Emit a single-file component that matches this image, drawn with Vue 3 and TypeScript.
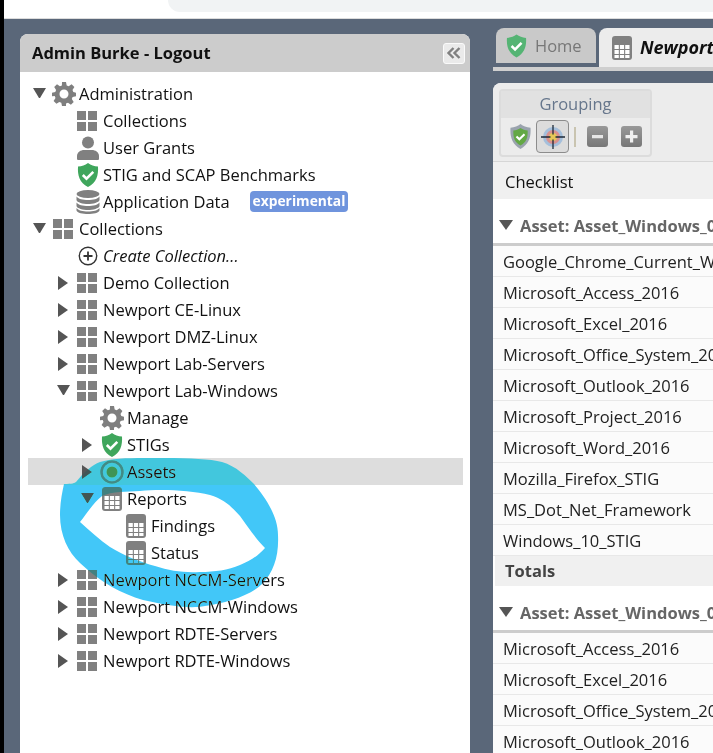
<script setup lang="ts">
type Icon = 'gear' | 'grid' | 'user' | 'shield' | 'db' | 'add' | 'target' | 'report'
interface Row {
  label: string
  depth: number
  icon: Icon
  arrow?: 'open' | 'closed'
  italic?: boolean
  badge?: string
  selected?: boolean
}

const rows: Row[] = [
  { label: 'Administration', depth: 0, icon: 'gear', arrow: 'open' },
  { label: 'Collections', depth: 1, icon: 'grid' },
  { label: 'User Grants', depth: 1, icon: 'user' },
  { label: 'STIG and SCAP Benchmarks', depth: 1, icon: 'shield' },
  { label: 'Application Data', depth: 1, icon: 'db', badge: 'experimental' },
  { label: 'Collections', depth: 0, icon: 'grid', arrow: 'open' },
  { label: 'Create Collection...', depth: 1, icon: 'add', italic: true },
  { label: 'Demo Collection', depth: 1, icon: 'grid', arrow: 'closed' },
  { label: 'Newport CE-Linux', depth: 1, icon: 'grid', arrow: 'closed' },
  { label: 'Newport DMZ-Linux', depth: 1, icon: 'grid', arrow: 'closed' },
  { label: 'Newport Lab-Servers', depth: 1, icon: 'grid', arrow: 'closed' },
  { label: 'Newport Lab-Windows', depth: 1, icon: 'grid', arrow: 'open' },
  { label: 'Manage', depth: 2, icon: 'gear' },
  { label: 'STIGs', depth: 2, icon: 'shield', arrow: 'closed' },
  { label: 'Assets', depth: 2, icon: 'target', arrow: 'closed', selected: true },
  { label: 'Reports', depth: 2, icon: 'report', arrow: 'open' },
  { label: 'Findings', depth: 3, icon: 'report' },
  { label: 'Status', depth: 3, icon: 'report' },
  { label: 'Newport NCCM-Servers', depth: 1, icon: 'grid', arrow: 'closed' },
  { label: 'Newport NCCM-Windows', depth: 1, icon: 'grid', arrow: 'closed' },
  { label: 'Newport RDTE-Servers', depth: 1, icon: 'grid', arrow: 'closed' },
  { label: 'Newport RDTE-Windows', depth: 1, icon: 'grid', arrow: 'closed' },
]

const firstGroup = [
  'Google_Chrome_Current_Windows',
  'Microsoft_Access_2016',
  'Microsoft_Excel_2016',
  'Microsoft_Office_System_2016',
  'Microsoft_Outlook_2016',
  'Microsoft_Project_2016',
  'Microsoft_Word_2016',
  'Mozilla_Firefox_STIG',
  'MS_Dot_Net_Framework',
  'Windows_10_STIG',
]

const secondGroup = [
  'Microsoft_Access_2016',
  'Microsoft_Excel_2016',
  'Microsoft_Office_System_2016',
  'Microsoft_Outlook_2016',
]

const reportCells =
  'M2.500 9h4.300v4H2.500zM7.900 9h4.200v4H7.900zM13.200 9h4.300v4h-4.300zM2.500 14h4.300v4H2.500zM7.900 14h4.200v4H7.900zM13.200 14h4.300v4h-4.300zM2.500 19h4.300v3H2.500zM7.900 19h4.200v3H7.900zM13.200 19h4.300v3h-4.300z'
</script>

<template>
  <div class="screen">
    <div class="edge"></div>
    <div class="page">
      <div class="browser-bar"><div class="address"></div></div>
      <div class="workspace">
        <aside class="nav-panel">
          <header class="nav-head">
            <span>Admin Burke - Logout</span>
            <button class="collapse">
              <svg width="16" height="14" viewBox="0 0 16 14" fill="none" stroke="#808080" stroke-width="2.4">
                <path d="M7.500 2 2.500 7l5 5M13.500 2l-5 5 5 5" />
              </svg>
            </button>
          </header>
          <div class="tree">
            <div
              v-for="row in rows"
              :key="row.label + row.depth"
              class="tree-row"
              :class="[`depth-${row.depth}`, { selected: row.selected }]"
            >
              <span class="arrow" :class="row.arrow"></span>
              <span class="tree-icon" :class="`icon-${row.icon}`">
                <svg v-if="row.icon === 'gear'" width="24" height="24" viewBox="0 0 24 24">
                  <path fill="#7f7f7f" fill-rule="evenodd" d="M10 0h4l.7 3.400 2 .8L19.600 2.300l2.800 2.800-1.900 2.900.8 2L24 10.700v3.600l-3.400.7-.8 2 1.900 2.900-2.800 2.800-2.900-1.900-2 .8L14 24h-4l-.7-3.300-2-.8-2.900 1.900-2.800-2.800 1.900-2.900-.8-2L0 14.300v-3.600L3.300 10l.8-2L2.200 5.100 5 2.300l2.900 1.900 2-.8zM12 7.500a4.500 4.500 0 1 0 0 9 4.500 4.500 0 0 0 0-9z" />
                </svg>
                <svg v-else-if="row.icon === 'grid'" width="20" height="20" viewBox="0 0 20 20" fill="#808080">
                  <path d="M0 0h9v9H0zM11 0h9v9h-9zM0 11h9v9H0zM11 11h9v9h-9z" />
                </svg>
                <svg v-else-if="row.icon === 'user'" width="22" height="24" viewBox="0 0 22 24" fill="#808080">
                  <circle cx="11" cy="6.500" r="6" />
                  <path d="M1 24c-1 0-1-1-1-2v-2c0-4 4-6 7-6h8c3 0 7 2 7 6v2c0 1 0 2-1 2z" />
                </svg>
                <svg v-else-if="row.icon === 'shield'" width="22" height="24" viewBox="0 0 22 24">
                  <path fill="#3fa65c" d="M11 0c3 2.200 6 3.200 10 3.500.6 9-1.500 16-10 20.500C2.500 19.500.4 12.500 1 3.500 5 3.200 8 2.200 11 0z" />
                  <path fill="none" stroke="#fff" stroke-width="2.600" d="m5.800 12 3.700 3.600 6.800-6.800" />
                </svg>
                <svg v-else-if="row.icon === 'db'" width="24" height="24" viewBox="0 0 24 24" fill="#808080">
                  <ellipse cx="12" cy="4" rx="11.500" ry="4" />
                  <path d="M.5 6.500C2 9 7 10 12 10s10-1 11.500-3.500V10C23 12.500 17 14 12 14S1 12.500.5 10zM.5 12.500C2 15 7 16 12 16s10-1 11.500-3.500V16C23 18.500 17 20 12 20S1 18.500.5 16zM.5 18C2 20.500 7 21.500 12 21.500S22 20.500 23.500 18v2.500C23 23 17 24 12 24S1 23 .5 20.500z" />
                </svg>
                <svg v-else-if="row.icon === 'add'" width="20" height="20" viewBox="0 0 20 20" fill="none" stroke="#333" stroke-width="1.400">
                  <circle cx="10" cy="10" r="8.700" />
                  <path stroke-width="1.800" d="M10 5.500v9M5.500 10h9" />
                </svg>
                <svg v-else-if="row.icon === 'target'" width="24" height="24" viewBox="0 0 24 24">
                  <circle cx="12" cy="12" r="10.500" fill="none" stroke="#4a8a86" stroke-width="2.600" />
                  <circle cx="12" cy="12" r="5.500" fill="#3f9455" />
                </svg>
                <svg v-else width="20" height="24" viewBox="0 0 20 24">
                  <rect width="20" height="24" rx="3" fill="#808080" />
                  <path fill="#fff" :d="reportCells" />
                </svg>
              </span>
              <span class="tree-label" :class="{ italic: row.italic }">{{ row.label }}</span>
              <span v-if="row.badge" class="badge">{{ row.badge }}</span>
            </div>
          </div>
        </aside>

        <main class="content">
          <div class="tabs">
            <div class="tab">
              <svg width="21" height="24" viewBox="0 0 22 24">
                <path fill="#55b474" d="M11 0c3 2.200 6 3.200 10 3.500.6 9-1.500 16-10 20.500C2.500 19.500.4 12.500 1 3.500 5 3.200 8 2.200 11 0z" />
                <path fill="none" stroke="#fff" stroke-width="2.600" d="m5.800 12 3.700 3.600 6.800-6.800" />
              </svg>
              <span>Home</span>
            </div>
            <div class="tab active">
              <svg width="20" height="24" viewBox="0 0 20 24">
                <rect width="20" height="24" rx="3" fill="#808080" />
                <path fill="#fff" :d="reportCells" />
              </svg>
              <span>Newport Lab-Windows</span>
            </div>
          </div>
          <div class="tab-strip"></div>

          <section class="grid-panel">
            <div class="toolbar">
              <div class="button-group">
                <div class="group-title">Grouping</div>
                <div class="group-buttons">
                  <svg class="tb-shield" width="21" height="25" viewBox="0 0 22 26">
                    <path fill="#9aa3ae" d="M11 0c3 2.400 6 3.400 10.500 3.800.6 10-1.500 17.200-10.500 22.200C2 21 0 13.800.5 3.800 5 3.400 8 2.400 11 0z" />
                    <path fill="#63a845" d="M11 4c2.500 1.600 4.500 2.400 7.500 2.800.3 7.500-1.200 12.500-7.500 15.700C4.700 19.300 3.200 14.300 3.500 6.800 6.500 6.400 8.500 5.600 11 4z" />
                    <path fill="none" stroke="#fff" stroke-width="2.200" d="m6.800 13 3 3 5.400-5.400" />
                  </svg>
                  <div class="tb-target">
                    <svg width="24" height="24" viewBox="0 0 24 24">
                      <circle cx="12" cy="12" r="10" fill="#a5bfdb" />
                      <circle cx="12" cy="12" r="7" fill="#d9918f" />
                      <circle cx="12" cy="12" r="4" fill="#e6c657" />
                      <path stroke="#1c2a3a" stroke-width="1.300" d="M12 0v9.500M12 14.500V24M0 12h9.500M14.500 12H24" />
                    </svg>
                  </div>
                  <span class="tb-sep"></span>
                  <span class="tb-square">
                    <svg width="21" height="21" viewBox="0 0 21 21"><path fill="#e6e6e6" d="M5 9h11v3.200H5z" /></svg>
                  </span>
                  <span class="tb-square plus">
                    <svg width="21" height="21" viewBox="0 0 21 21"><path fill="#f0f0f0" d="M9 4.500h3.200V9h4.300v3.200h-4.300v4.300H9v-4.300H4.500V9H9z" /></svg>
                  </span>
                </div>
              </div>
            </div>

            <div class="col-head">Checklist</div>

            <div class="group-head">
              <span class="group-arrow"></span>Asset: Asset_Windows_0
            </div>
            <div v-for="name in firstGroup" :key="name" class="grid-row">{{ name }}</div>
            <div class="totals">Totals</div>

            <div class="group-head">
              <span class="group-arrow"></span>Asset: Asset_Windows_0
            </div>
            <div v-for="name in secondGroup" :key="'b' + name" class="grid-row">{{ name }}</div>
          </section>
        </main>
      </div>
    </div>

    <!-- hand-drawn highlighter mark on top of the screenshot -->
    <svg class="scribble" width="713" height="753" viewBox="0 0 713 753">
      <path
        fill="#42c7f8"
        fill-rule="evenodd"
        d="M64 484C72 484 75 483 76 482C84 472 92 465 100 462C115 457 140 458 165 458C190 458 210 459 222 462C236 466 247 477 254 484C264 496 278 515 278 535C279 555 274 572 262 584C250 596 225 603 205 606C190 609 170 606 143 600C122 594 100 582 80 563C68 552 60 535 60 515C60 503 62 493 64 484Z
           M80 522C88 512 94 502 102 496C112 491 127 492 140 491C160 489 190 490 210 495C224 499 232 507 240 516C248 527 256 539 265 548C258 556 250 561 240 565C228 570 215 572 200 572C185 573 170 571 155 566C140 562 125 556 110 547C100 540 90 531 80 522Z"
      />
    </svg>
  </div>
</template>

<style>
html,
body {
  margin: 0;
  background: #5a6779;
}
</style>

<style scoped>
.screen {
  position: relative;
  display: flex;
  width: 713px;
  height: 753px;
  overflow: hidden;
  background: #5a6779;
  font-family: "Open Sans", "Noto Sans", sans-serif;
  color: #111;
}

.edge {
  flex-shrink: 0;
  width: 4px;
  background: #000;
}

.page {
  flex: 1;
  min-width: 0;
}

.browser-bar {
  box-sizing: border-box;
  height: 19px;
  background: #fff;
  border-bottom: 1px solid #dcdcdc;
  padding-left: 164px;
}

.address {
  height: 12px;
  background: #f1f3f4;
  border-bottom-left-radius: 12px;
}

.workspace {
  display: flex;
  height: 734px;
  padding-top: 15px;
  padding-left: 16px;
  box-sizing: border-box;
}

.nav-panel {
  width: 450px;
  flex-shrink: 0;
  background: #fff;
  border-radius: 8px 8px 0 0;
  overflow: hidden;
}

.nav-head {
  display: flex;
  align-items: center;
  justify-content: space-between;
  box-sizing: border-box;
  height: 38px;
  padding: 0 5px 0 12px;
  background: #cccccc;
  font-size: 16.500px;
  font-weight: 700;
  line-height: 36px;
}

.collapse {
  display: flex;
  align-items: center;
  justify-content: center;
  width: 22px;
  height: 21px;
  padding: 0;
  background: #eaeaea;
  border: 1px solid #fafafa;
  border-radius: 3px;
}

.tree {
  padding: 8px 7px 0 8px;
}

.tree-row {
  display: flex;
  align-items: center;
  height: 27px;
  font-size: 16.500px;
  white-space: nowrap;
}

.depth-0 { padding-left: 5px; }
.depth-1 { padding-left: 29px; }
.depth-2 { padding-left: 53px; }
.depth-3 { padding-left: 77px; }

.tree-row.selected {
  background: #dddddd;
}

.arrow {
  display: block;
  flex-shrink: 0;
  width: 19px;
  height: 14px;
}

.arrow.open {
  width: 13px;
  height: 0;
  margin-right: 6px;
  border-left: 6.500px solid transparent;
  border-right: 6.500px solid transparent;
  border-top: 10px solid #555;
  box-sizing: border-box;
  margin-top: -2px;
}

.arrow.closed {
  width: 0;
  height: 0;
  margin-left: 1px;
  margin-right: 8px;
  border-top: 7px solid transparent;
  border-bottom: 7px solid transparent;
  border-left: 10px solid #555;
  box-sizing: content-box;
}

.tree-icon {
  display: flex;
  align-items: center;
  justify-content: center;
  flex-shrink: 0;
  width: 24px;
  height: 24px;
  margin-right: 3px;
}

.icon-grid svg {
  margin-left: -2px;
}

.badge {
  margin-left: 20px;
  padding: 0 3px;
  height: 21px;
  line-height: 20px;
  background: #6f94dd;
  color: #fff;
  font-size: 13.800px;
  font-weight: 700;
  border-radius: 4px;
}

.italic {
  font-style: italic;
}

.content {
  flex: 1;
  min-width: 0;
  margin-left: 23px;
  margin-top: -6px;
}

.tabs {
  display: flex;
  align-items: flex-start;
  gap: 3px;
  height: 39px;
  padding-left: 3px;
  white-space: nowrap;
}

.tab {
  display: flex;
  flex-shrink: 0;
  align-items: center;
  gap: 8px;
  box-sizing: border-box;
  width: 100px;
  height: 35px;
  padding-left: 10px;
  background: #c9c9c9;
  border-radius: 8px 8px 0 0;
  color: #777;
  font-size: 16.500px;
}

.tab.active {
  width: 260px;
  height: 39px;
  padding-left: 13px;
  gap: 8px;
  background: #ececec;
  color: #111;
  font-size: 18px;
  font-weight: 700;
  font-style: italic;
  line-height: 37px;
}

.tab-strip {
  height: 4px;
  background: #cfcfcf;
}

.grid-panel {
  margin-top: 12px;
  background: #fff;
  border-radius: 8px 0 0 0;
  overflow: hidden;
  height: 680px;
}

.toolbar {
  box-sizing: border-box;
  height: 79px;
  padding: 6px 0 0 6px;
  background: #ececec;
  border-bottom: 1px solid #d6d6d6;
}

.button-group {
  box-sizing: border-box;
  width: 153px;
  height: 68px;
  border: 2px solid #dcdcdc;
  border-radius: 4px;
  background: #ececec;
}

.group-title {
  height: 27px;
  line-height: 26px;
  background: #e1e1e1;
  color: #66768c;
  font-size: 16.500px;
  text-align: center;
}

.group-buttons {
  display: flex;
  align-items: center;
  height: 37px;
  padding-left: 9px;
}

.tb-shield {
  margin-right: 5px;
}

.tb-target {
  display: flex;
  align-items: center;
  justify-content: center;
  box-sizing: border-box;
  width: 33px;
  height: 33px;
  background: #dcdcdc;
  border: 1px solid #8c8c8c;
  border-radius: 4px;
}

.tb-sep {
  width: 2px;
  height: 20px;
  margin: 0 11px 0 5px;
  background: #c9c4b0;
}

.tb-square {
  display: flex;
  align-items: center;
  justify-content: center;
  width: 21px;
  height: 21px;
  background: linear-gradient(#999, #777);
  border-radius: 3px;
}

.tb-square.plus {
  margin-left: 13px;
}

.col-head {
  height: 37px;
  line-height: 39px;
  padding-left: 12px;
  background: #f0f0f0;
  font-size: 16.500px;
}

.group-head {
  display: flex;
  align-items: center;
  box-sizing: border-box;
  height: 47px;
  padding: 8px 0 0 6px;
  background: #fff;
  border-bottom: 3px solid #cccccc;
  color: #666;
  font-size: 16.500px;
  font-weight: 700;
  white-space: nowrap;
}

.group-arrow {
  width: 0;
  height: 0;
  margin-right: 7px;
  border-left: 7px solid transparent;
  border-right: 7px solid transparent;
  border-top: 10px solid #555;
}

.grid-row {
  box-sizing: border-box;
  height: 31px;
  line-height: 31px;
  padding-left: 10px;
  background: #fbfbfb;
  border-bottom: 1px solid #e8e8e8;
  color: #222;
  font-size: 16.500px;
  white-space: nowrap;
}

.totals {
  height: 30px;
  line-height: 30px;
  margin-left: 2px;
  padding-left: 10px;
  background: #f0f0f0;
  color: #444;
  font-size: 16.500px;
  font-weight: 700;
}

.scribble {
  position: absolute;
  left: 0;
  top: 0;
  mix-blend-mode: darken;
  pointer-events: none;
}
</style>
